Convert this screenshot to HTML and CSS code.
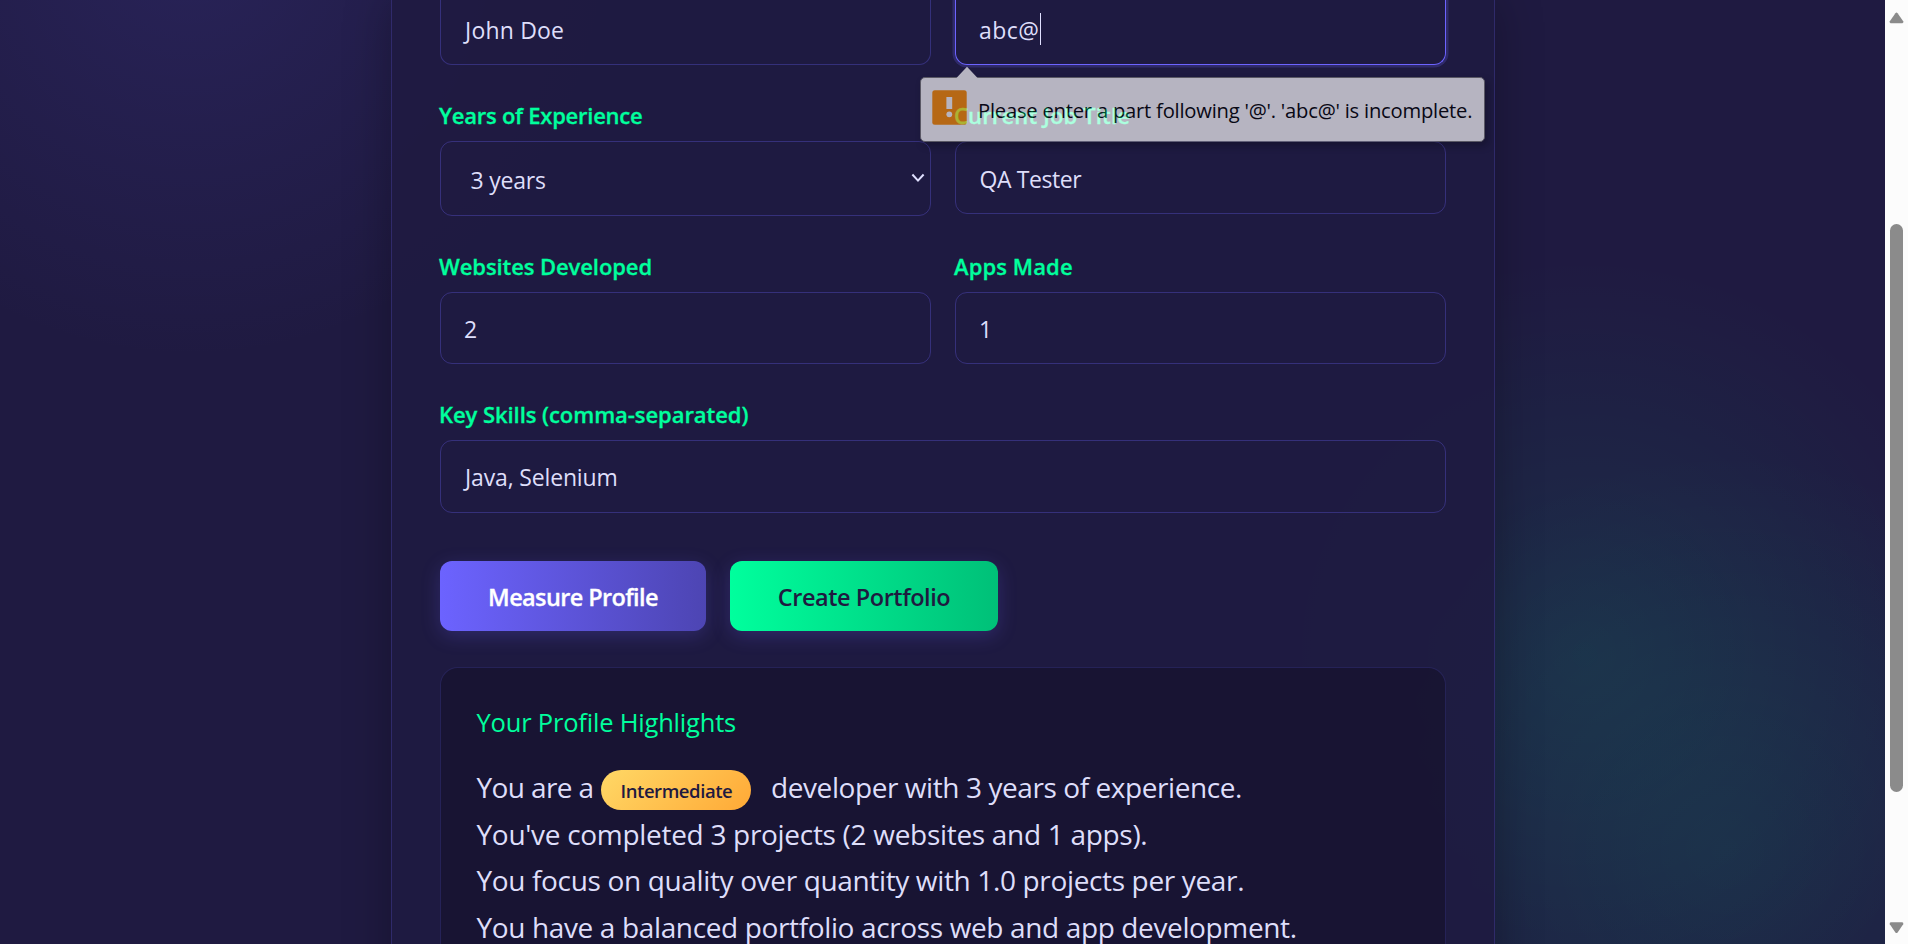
FILE: index.html
```html
<!DOCTYPE html>
<html lang="en">
<head>
<meta charset="utf-8">
<title>Developer Profile</title>
<link rel="stylesheet" href="styles.css">
</head>
<body>
<div class="window">
  <main class="page">
    <section class="card">
      <div class="row row-top">
        <div class="field"><div class="input cut"><span class="v-john">John Doe</span></div></div>
        <div class="field">
          <div class="input cut focused"><span class="v-abc">abc@</span><i class="caret"></i></div>
          <div class="tooltip">
            <svg class="tip-arrow" width="24" height="13" viewBox="0 0 24 13"><path d="M1 12.5 L12 0.8 L23 12.5 Z" fill="#fff"/></svg>
            <svg class="warn" width="35" height="35" viewBox="0 0 35 35"><rect x=".3" y=".3" width="34.4" height="34.4" rx="2.5" fill="#ff8e00"/><rect x="14.4" y="7" width="5.8" height="12" fill="#fff"/><circle cx="17.3" cy="24.3" r="2.9" fill="#fff"/></svg>
            <span class="tip-text">Please enter a part following '@'. 'abc@' is incomplete.</span>
          </div>
        </div>
      </div>
      <div class="row">
        <div class="field">
          <div class="label l-years">Years of Experience</div>
          <div class="input select"><span class="v-years">3 years</span>
            <svg class="chevron" width="14" height="10" viewBox="0 0 14 10"><path d="M1.4 1.5 L7 7.6 L12.6 1.5" fill="none" stroke="#e0e0ff" stroke-width="2"/></svg>
          </div>
        </div>
        <div class="field">
          <div class="label l-job">Current Job Title</div>
          <div class="input job"><span class="v-job">QA Tester</span></div>
        </div>
      </div>
      <div class="row">
        <div class="field"><div class="label l-web">Websites Developed</div><div class="input"><span>2</span></div></div>
        <div class="field"><div class="label l-apps">Apps Made</div><div class="input"><span>1</span></div></div>
      </div>
      <div class="row">
        <div class="field"><div class="label l-skills">Key Skills (comma-separated)</div><div class="input skills"><span class="v-java">Java, Selenium</span></div></div>
      </div>
      <div class="actions">
        <div class="btn primary">Measure Profile</div>
        <div class="btn accent">Create Portfolio</div>
      </div>
      <div class="results">
        <div class="title">Your Profile Highlights</div>
        <div class="line first"><span class="t1">You are a</span><span class="badge">Intermediate</span><span class="t2">developer with 3 years of experience.</span></div>
        <div class="line t3">You've completed 3 projects (2 websites and 1 apps).</div>
        <div class="line t4">You focus on quality over quantity with 1.0 projects per year.</div>
        <div class="line t5">You have a balanced portfolio across web and app development.</div>
      </div>
    </section>
  </main>
  <div class="scrollbar">
    <svg class="up" width="15" height="12" viewBox="0 0 15 12"><path d="M6.4 1.2 Q7.5 0 8.6 1.2 L14.2 9.3 Q14.8 11 13.4 11.3 H1.6 Q.2 11 .8 9.3 Z" fill="#8b8b8b"/></svg>
    <div class="thumb"></div>
    <svg class="down" width="15" height="12" viewBox="0 0 15 12"><path d="M6.4 10.4 Q7.5 11.6 8.6 10.4 L14.2 2.3 Q14.8 .6 13.4 .3 H1.6 Q.2 .6 .8 2.3 Z" fill="#8b8b8b"/></svg>
  </div>
</div>
</body>
</html>
```
FILE: styles.css
```css
* { box-sizing: border-box; }
html, body { margin: 0; height: 944px; overflow: hidden; }
body { font-family: "Open Sans", "Noto Sans", sans-serif; color: #dedefa; background: #1f1a41; }
.window { display: flex; width: 1908px; height: 944px; overflow: hidden; }
.page {
  width: 1885px; height: 944px; overflow: hidden; padding-left: 391px;
  background:
    radial-gradient(circle at 190px -60px, rgba(108,99,255,.12), rgba(108,99,255,0) 420px),
    radial-gradient(circle at 1585px 655px, rgba(0,255,157,.085), rgba(0,255,157,.045) 190px, rgba(0,255,157,0) 400px),
    radial-gradient(circle at 1725px 850px, rgba(0,255,157,.075), rgba(0,255,157,.045) 180px, rgba(0,255,157,0) 400px),
    #1f1a41;
}
.card {
  width: 1104px; height: 1100px; padding: 0 48px;
  background: rgba(31,26,65,.88);
  border: solid rgba(108,99,255,.22); border-width: 0 1px;
  box-shadow: 0 0 44px rgba(0,0,0,.27);
}
.row { display: flex; gap: 24px; margin-bottom: 35px; }
.field { flex: 1; position: relative; }
.label { height: 30px; margin: 0 0 11px -1px; line-height: 31px; font-size: 22px; font-weight: 600; color: #00ff9d; white-space: nowrap; -webkit-text-stroke: .3px #00ff9d; }
.input {
  position: relative; display: flex; align-items: flex-start; height: 72px; padding: 21px 23px 0;
  border: 1px solid rgba(108,99,255,.3); border-radius: 12px;
  font-size: 23px; line-height: 30px; white-space: nowrap;
}
.input.cut { height: 65px; padding-top: 15px; border-top: 0; border-radius: 0 0 12px 12px; }
.input.focused { border-color: #6c63ff; box-shadow: 0 0 0 2.5px rgba(108,99,255,.22); }
.input.job { height: 73px; padding-top: 22px; }
.input.select { height: 75px; padding: 23px 5px 0 29px; justify-content: space-between; }
.input.skills { height: 73px; }
.chevron { margin-top: 8px; }
.caret { width: 1px; height: 32px; margin: -2px 0 0; background: #e0e0ff; }

.v-john { margin-left: 1px; letter-spacing: .2px; }
.v-abc { letter-spacing: .5px; }
.v-years { margin-left: .5px; letter-spacing: -.2px; }
.v-job { margin-left: .5px; letter-spacing: -.42px; }
.v-java { margin-left: 1px; letter-spacing: -.15px; }
.l-years { letter-spacing: -.25px; }
.l-web { letter-spacing: -.09px; }
.l-apps { letter-spacing: .1px; }
.l-job { letter-spacing: .15px; }
.l-skills { letter-spacing: -.06px; }

.tooltip {
  position: absolute; left: -35px; top: 77px; z-index: 2; display: flex; width: 565px; height: 65px;
  padding: 12px 11px; background: #fff; border: 1px solid #777; border-radius: 5px; opacity: .675;
  box-shadow: 3px 4px 7px rgba(0,0,0,.35);
}
.tip-arrow { position: absolute; left: 34px; top: -12px; }
.warn { margin-right: 11px; flex: none; }
.tip-text { margin-top: 1px; font-size: 20.2px; line-height: 38px; letter-spacing: -.22px; color: #000; white-space: nowrap; }

.actions { display: flex; gap: 24px; margin-top: 48px; }
.btn { height: 70px; padding-top: 21px; border-radius: 12px; font-size: 23.5px; line-height: 30px; text-align: center; white-space: nowrap; box-shadow: 0 5px 19px rgba(108,99,255,.22); }
.primary { width: 266px; font-weight: 600; letter-spacing: -.62px; color: #fff; background: linear-gradient(90deg, #6c63ff, #4d45b3); -webkit-text-stroke: .3px #fff; }
.accent { width: 268px; font-weight: 600; letter-spacing: -.45px; color: #1f1a40; background: linear-gradient(90deg, #00ff9d, #00c078); }

.results { height: 420px; margin-top: 36px; padding: 36px 35.5px; border: 1px solid rgba(108,99,255,.18); border-radius: 18px; background: rgba(20,17,42,.6); }
.title { height: 36px; margin-bottom: 24px; font-size: 25.5px; line-height: 36px; letter-spacing: -.2px; color: #00ff9d; }
.line { height: 46.7px; font-size: 28px; line-height: 46.7px; white-space: nowrap; }
.first { display: flex; align-items: flex-start; }
.t1 { width: 124.5px; letter-spacing: -.62px; }
.badge { width: 150px; height: 40px; margin: 6px 20px 0 0; padding-left: 19.5px; border-radius: 20px; font-size: 18.5px; font-weight: 600; line-height: 41px; letter-spacing: -.44px; color: #1f1a40; background: linear-gradient(135deg, #ffd866, #ffa936); }
.t2 { letter-spacing: -.42px; }
.t3 { letter-spacing: -.3px; }
.t4 { letter-spacing: -.35px; }
.t5 { letter-spacing: -.365px; }

.scrollbar { display: flex; flex-direction: column; align-items: center; width: 23px; height: 944px; padding-top: 12px; background: #fcfcfc; }
.thumb { width: 13px; height: 568px; margin: 200px 0 129.5px; border-radius: 7px; background: #8b8b8b; }
```
